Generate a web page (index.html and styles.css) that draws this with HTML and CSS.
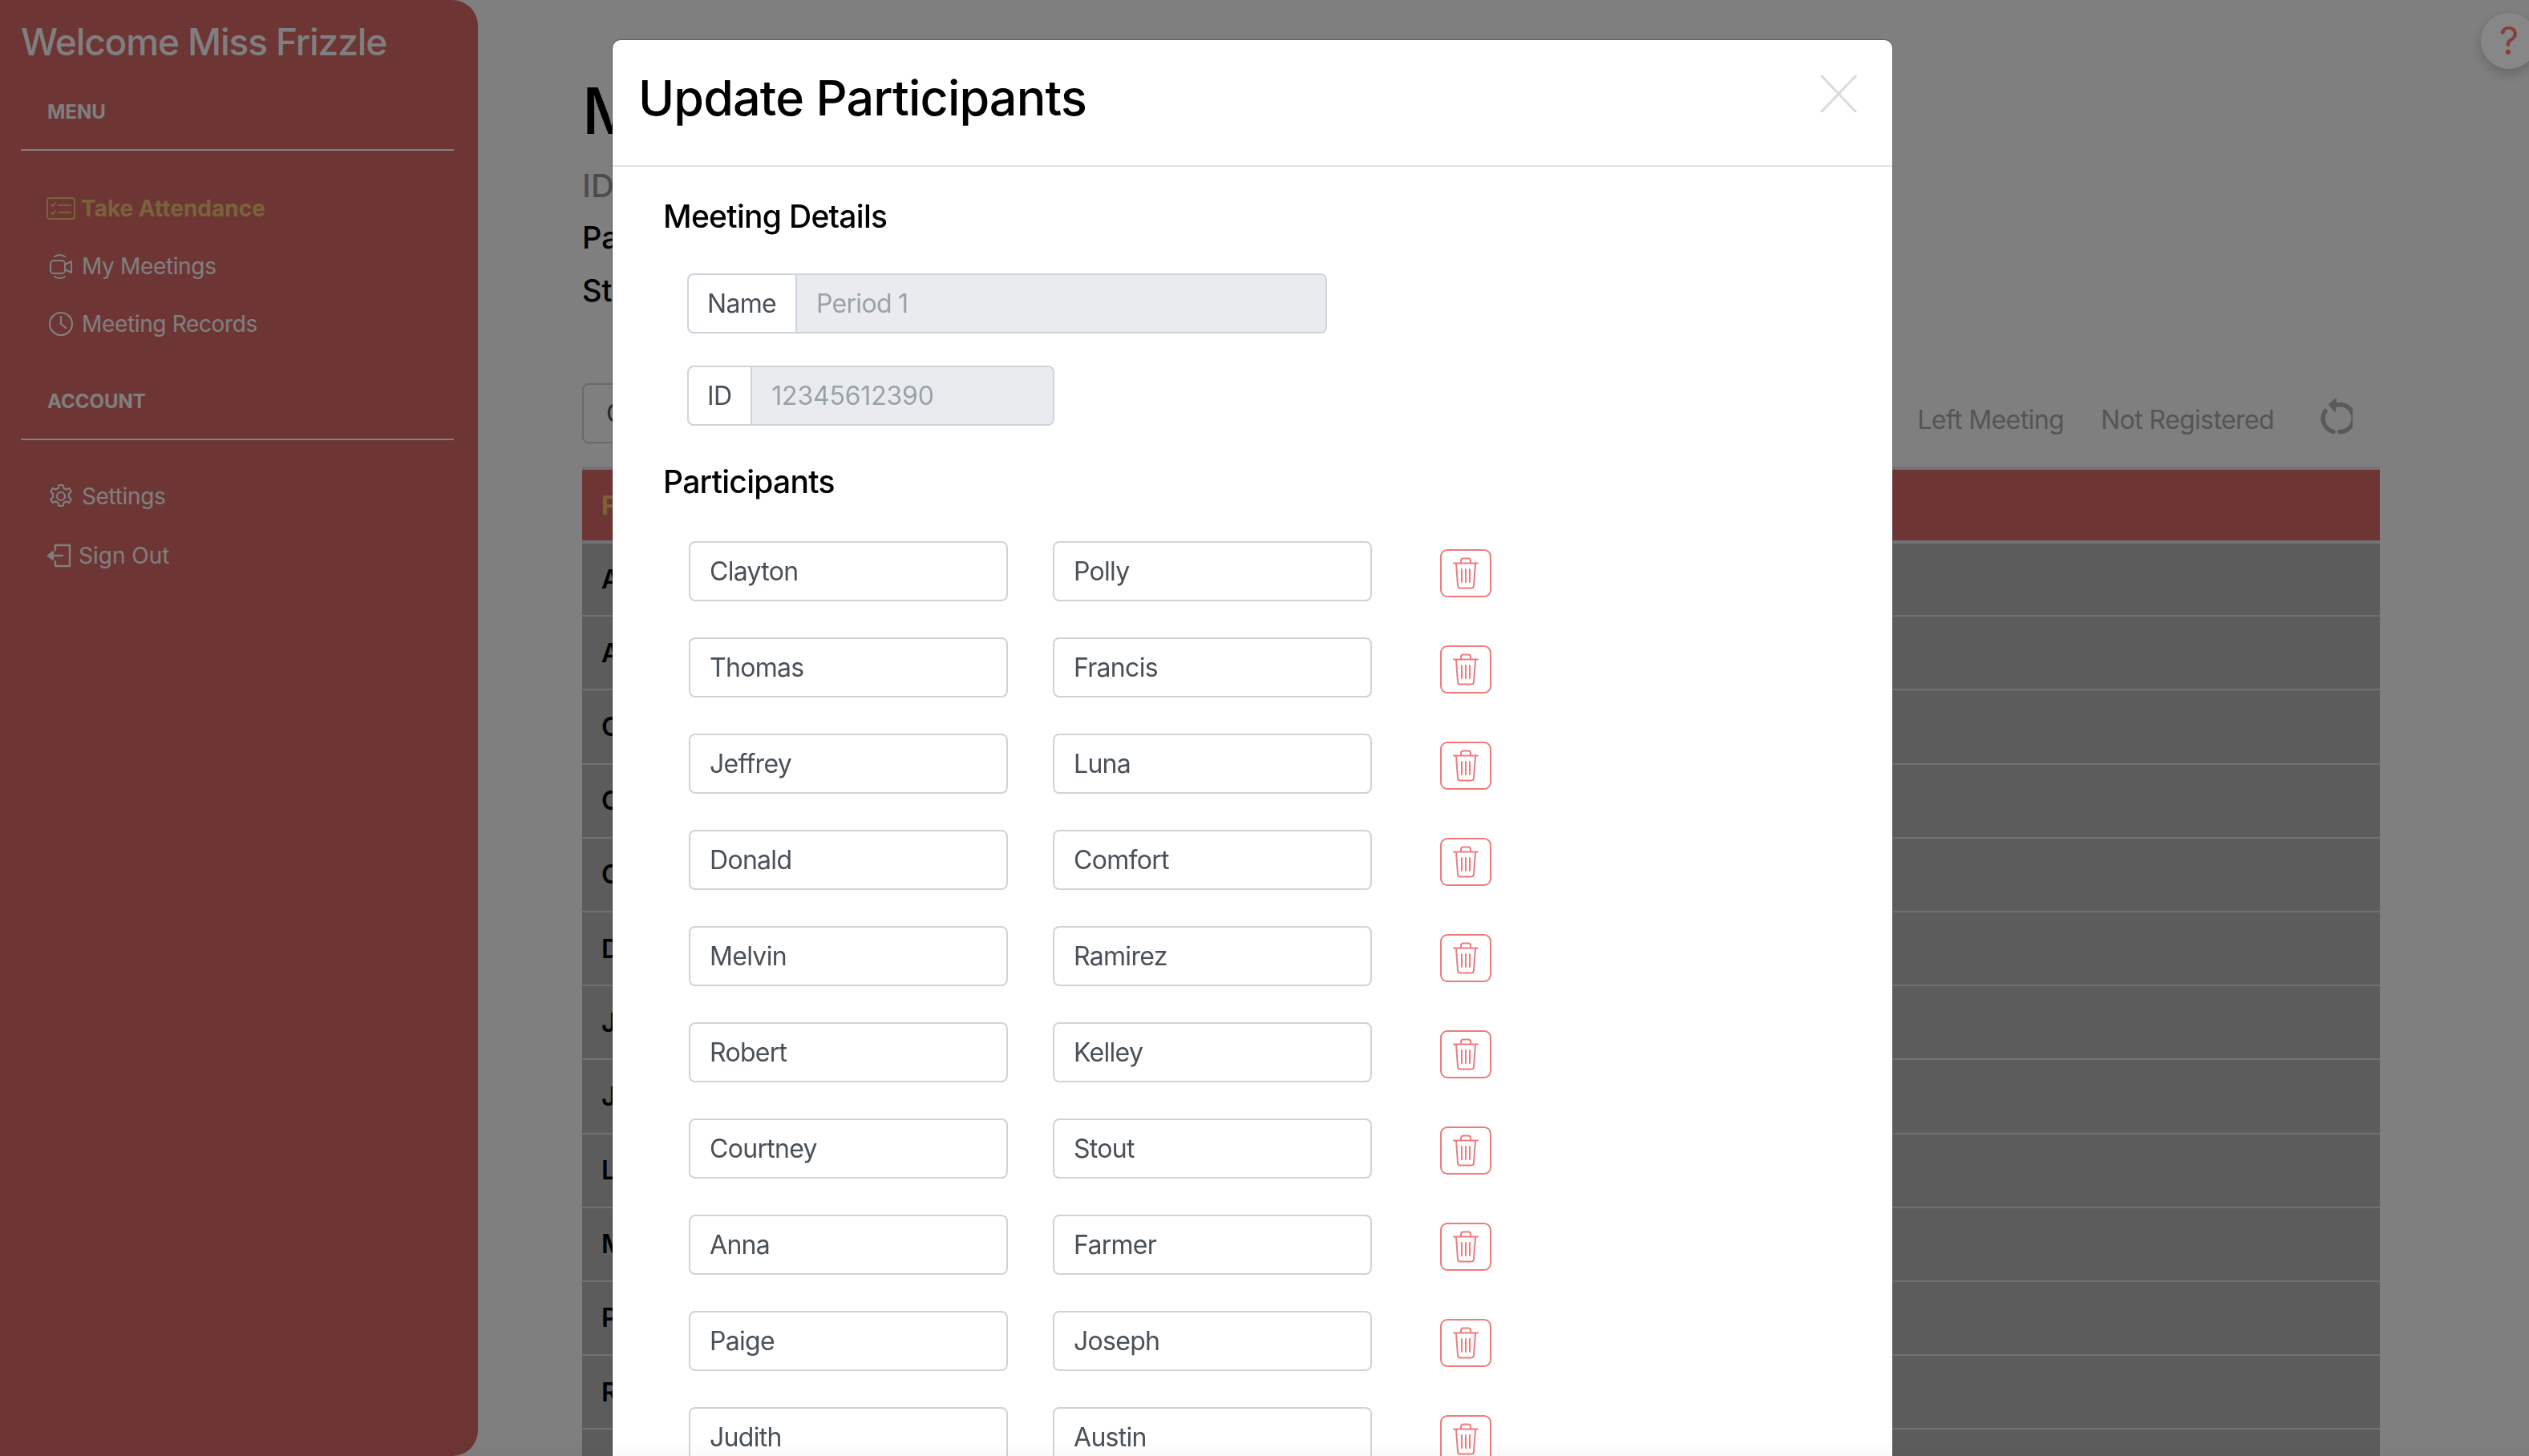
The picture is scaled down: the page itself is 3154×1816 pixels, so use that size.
FILE: index.html
```html
<!DOCTYPE html>
<html>
<head>
	<meta charset="utf-8">
	<title>Update Participants</title>
	<link rel="stylesheet" href="styles.css">
</head>
<body>

	<!-- SIDEBAR -->
	<section class="app">
		<nav class="sidebar">
			<h2 class="welcome">Welcome Miss Frizzle</h2>

			<h6 class="nav-title nav-title-menu">MENU</h6>
			<ul class="nav-list nav-list-menu">
				<li class="nav-item active">
					<svg class="nav-icon icon-wide" viewBox="0 0 36 28" fill="none" stroke="currentColor" stroke-width="2" stroke-linecap="round" stroke-linejoin="round"><rect x="1" y="1" width="34" height="26" rx="3"/><path d="M6 9l2 2 3-4M6 19l2 2 3-4M15 10h15M15 19h15"/></svg>
					Take Attendance
				</li>
				<li class="nav-item">
					<svg class="nav-icon" viewBox="0 0 32 32" fill="none" stroke="currentColor" stroke-width="2" stroke-linecap="round" stroke-linejoin="round"><rect x="3" y="9" width="18" height="16" rx="4"/><path d="M21 14l8-4v14l-8-4M8 4c4-2.500 9-2.500 13 0M8 29c4 2.500 9 2.500 13 0"/></svg>
					My Meetings
				</li>
				<li class="nav-item">
					<svg class="nav-icon" viewBox="0 0 32 32" fill="none" stroke="currentColor" stroke-width="2.200" stroke-linecap="round" stroke-linejoin="round"><circle cx="16" cy="16" r="14"/><path d="M16 7v9l6 5"/></svg>
					Meeting Records
				</li>
			</ul>

			<h6 class="nav-title">ACCOUNT</h6>
			<ul class="nav-list nav-list-account">
				<li class="nav-item">
					<svg class="nav-icon" viewBox="0 0 32 32" fill="none" stroke="currentColor" stroke-width="2.200" stroke-linecap="round" stroke-linejoin="round"><circle cx="16" cy="16" r="5"/><path d="M13.500 2h5l1 4 3 1.500 3.800-1.500 2.500 4.300-3 2.700v4l3 2.700-2.500 4.300-3.800-1.500-3 1.500-1 4h-5l-1-4-3-1.500-3.800 1.500-2.500-4.300 3-2.700v-4l-3-2.700 2.500-4.300 3.800 1.500 3-1.500z"/></svg>
					Settings
				</li>
				<li class="nav-item nav-item-out">
					<svg class="nav-icon icon-out" viewBox="0 0 32 32" fill="none" stroke="currentColor" stroke-width="2.400" stroke-linecap="round" stroke-linejoin="round"><path d="M11 9V3h18v26H11v-6M20 16H7"/><path d="M8 11.500L2 16l6 4.500z" fill="currentColor"/></svg>
					Sign Out
				</li>
			</ul>
		</nav>

		<!-- PAGE BEHIND THE MODAL -->
		<main class="content">
			<h1 class="page-title">Meeting</h1>
			<p class="page-id">ID: 12345612390</p>
			<p class="page-line">Participants: 12</p>
			<p class="page-line">Status: Active</p>

			<section class="toolbar">
				<div class="search">Copy Link</div>
				<div class="filters">
					<span>Left Meeting</span>
					<span>Not Registered</span>
					<svg class="refresh" viewBox="0 0 40 45" fill="none" stroke="currentColor" stroke-width="5.500" stroke-linecap="round"><path d="M20 8A17 17 0 1 1 24 41.500M16 41.500A17 17 0 0 1 6 15.500"/><path d="M19 1L11 7.500 18 16z" fill="currentColor" stroke-width="2" stroke-linejoin="round"/></svg>
				</div>
			</section>

			<table class="table">
				<thead><tr><th>First Name</th></tr></thead>
				<tbody>
					<tr><td>Anna</td></tr>
					<tr><td>Austin</td></tr>
					<tr><td>Clayton</td></tr>
					<tr><td>Comfort</td></tr>
					<tr><td>Courtney</td></tr>
					<tr><td>Donald</td></tr>
					<tr><td>Jeffrey</td></tr>
					<tr><td>Judith</td></tr>
					<tr><td>Luna</td></tr>
					<tr><td>Melvin</td></tr>
					<tr><td>Paige</td></tr>
					<tr><td>Robert</td></tr>
					<tr><td></td></tr>
				</tbody>
			</table>
		</main>
	</section>

	<!-- MODAL -->
	<section class="overlay">
		<article class="modal">
			<header class="modal-header">
				<h4 class="modal-title">Update Participants</h4>
				<svg class="close" viewBox="0 0 46 46" fill="none" stroke="#dadada" stroke-width="3"><path d="M1 0l44 46M45 0L1 46"/></svg>
			</header>

			<section class="modal-body">
				<h5 class="section-title">Meeting Details</h5>

				<div class="group group-name">
					<span class="group-label">Name</span>
					<span class="group-value">Period 1</span>
				</div>
				<div class="group group-id">
					<span class="group-label">ID</span>
					<span class="group-value group-number">12345612390</span>
				</div>

				<h5 class="section-title section-participants">Participants</h5>

				<div class="row">
					<div class="field">Clayton</div>
					<div class="field">Polly</div>
					<button class="trash"><svg viewBox="0 0 32 40" fill="none" stroke="currentColor" stroke-width="2" stroke-linecap="round"><path d="M1 7.500h30M10 7V4.500C10 2.500 11.500 1.500 13 1.500h6c1.500 0 3 1 3 3V7M4 8l2 27c0 2 1.500 3.500 3.500 3.500h13c2 0 3.500-1.500 3.500-3.500l2-27M11 15v16M16 15v16M21 15v16"/></svg></button>
				</div>
				<div class="row">
					<div class="field">Thomas</div>
					<div class="field">Francis</div>
					<button class="trash"><svg viewBox="0 0 32 40" fill="none" stroke="currentColor" stroke-width="2" stroke-linecap="round"><path d="M1 7.500h30M10 7V4.500C10 2.500 11.500 1.500 13 1.500h6c1.500 0 3 1 3 3V7M4 8l2 27c0 2 1.500 3.500 3.500 3.500h13c2 0 3.500-1.500 3.500-3.500l2-27M11 15v16M16 15v16M21 15v16"/></svg></button>
				</div>
				<div class="row">
					<div class="field">Jeffrey</div>
					<div class="field">Luna</div>
					<button class="trash"><svg viewBox="0 0 32 40" fill="none" stroke="currentColor" stroke-width="2" stroke-linecap="round"><path d="M1 7.500h30M10 7V4.500C10 2.500 11.500 1.500 13 1.500h6c1.500 0 3 1 3 3V7M4 8l2 27c0 2 1.500 3.500 3.500 3.500h13c2 0 3.500-1.500 3.500-3.500l2-27M11 15v16M16 15v16M21 15v16"/></svg></button>
				</div>
				<div class="row">
					<div class="field">Donald</div>
					<div class="field">Comfort</div>
					<button class="trash"><svg viewBox="0 0 32 40" fill="none" stroke="currentColor" stroke-width="2" stroke-linecap="round"><path d="M1 7.500h30M10 7V4.500C10 2.500 11.500 1.500 13 1.500h6c1.500 0 3 1 3 3V7M4 8l2 27c0 2 1.500 3.500 3.500 3.500h13c2 0 3.500-1.500 3.500-3.500l2-27M11 15v16M16 15v16M21 15v16"/></svg></button>
				</div>
				<div class="row">
					<div class="field">Melvin</div>
					<div class="field">Ramirez</div>
					<button class="trash"><svg viewBox="0 0 32 40" fill="none" stroke="currentColor" stroke-width="2" stroke-linecap="round"><path d="M1 7.500h30M10 7V4.500C10 2.500 11.500 1.500 13 1.500h6c1.500 0 3 1 3 3V7M4 8l2 27c0 2 1.500 3.500 3.500 3.500h13c2 0 3.500-1.500 3.500-3.500l2-27M11 15v16M16 15v16M21 15v16"/></svg></button>
				</div>
				<div class="row">
					<div class="field">Robert</div>
					<div class="field">Kelley</div>
					<button class="trash"><svg viewBox="0 0 32 40" fill="none" stroke="currentColor" stroke-width="2" stroke-linecap="round"><path d="M1 7.500h30M10 7V4.500C10 2.500 11.500 1.500 13 1.500h6c1.500 0 3 1 3 3V7M4 8l2 27c0 2 1.500 3.500 3.500 3.500h13c2 0 3.500-1.500 3.500-3.500l2-27M11 15v16M16 15v16M21 15v16"/></svg></button>
				</div>
				<div class="row">
					<div class="field">Courtney</div>
					<div class="field">Stout</div>
					<button class="trash"><svg viewBox="0 0 32 40" fill="none" stroke="currentColor" stroke-width="2" stroke-linecap="round"><path d="M1 7.500h30M10 7V4.500C10 2.500 11.500 1.500 13 1.500h6c1.500 0 3 1 3 3V7M4 8l2 27c0 2 1.500 3.500 3.500 3.500h13c2 0 3.500-1.500 3.500-3.500l2-27M11 15v16M16 15v16M21 15v16"/></svg></button>
				</div>
				<div class="row">
					<div class="field">Anna</div>
					<div class="field">Farmer</div>
					<button class="trash"><svg viewBox="0 0 32 40" fill="none" stroke="currentColor" stroke-width="2" stroke-linecap="round"><path d="M1 7.500h30M10 7V4.500C10 2.500 11.500 1.500 13 1.500h6c1.500 0 3 1 3 3V7M4 8l2 27c0 2 1.500 3.500 3.500 3.500h13c2 0 3.500-1.500 3.500-3.500l2-27M11 15v16M16 15v16M21 15v16"/></svg></button>
				</div>
				<div class="row">
					<div class="field">Paige</div>
					<div class="field">Joseph</div>
					<button class="trash"><svg viewBox="0 0 32 40" fill="none" stroke="currentColor" stroke-width="2" stroke-linecap="round"><path d="M1 7.500h30M10 7V4.500C10 2.500 11.500 1.500 13 1.500h6c1.500 0 3 1 3 3V7M4 8l2 27c0 2 1.500 3.500 3.500 3.500h13c2 0 3.500-1.500 3.500-3.500l2-27M11 15v16M16 15v16M21 15v16"/></svg></button>
				</div>
				<div class="row">
					<div class="field">Judith</div>
					<div class="field">Austin</div>
					<button class="trash"><svg viewBox="0 0 32 40" fill="none" stroke="currentColor" stroke-width="2" stroke-linecap="round"><path d="M1 7.500h30M10 7V4.500C10 2.500 11.500 1.500 13 1.500h6c1.500 0 3 1 3 3V7M4 8l2 27c0 2 1.500 3.500 3.500 3.500h13c2 0 3.500-1.500 3.500-3.500l2-27M11 15v16M16 15v16M21 15v16"/></svg></button>
				</div>
			</section>
		</article>
	</section>

	<!-- HELP BUTTON -->
	<figure class="help">?</figure>

</body>
</html>
```

FILE: styles.css
```css
* {
	box-sizing: border-box;
}

html, body {
	margin: 0;
	height: 100%;
	overflow: hidden;
}

body {
	background: #fff;
	color: #000;
	font-family: Inter, "Noto Sans", sans-serif;
}

h1, h2, h4, h5, h6, p, ul, figure {
	margin: 0;
	padding: 0;
}

.app {
	display: flex;
	height: 100vh;
}

/* sidebar */
.sidebar {
	flex: 0 0 596px;
	height: 100vh;
	background: #dd6a6a;
	color: #fff;
	border-radius: 0 32px 32px 0;
	padding: 24px 30px 0 26px;
}

.welcome {
	font-size: 46px;
	font-weight: 500;
	line-height: 56px;
	letter-spacing: -1.100px;
	white-space: nowrap;
}

.nav-title {
	font-size: 24px;
	font-weight: 700;
	line-height: 28px;
	padding: 0 0 32px 33px;
	border-bottom: 2px solid #fff;
}

.nav-title-menu {
	margin-top: 46px;
}

.nav-list {
	list-style: none;
	padding: 36px 0 0 32px;
}

.nav-list-menu {
	margin-bottom: 47px;
}

.nav-list-account {
	padding-top: 34px;
}

.nav-item {
	display: flex;
	align-items: center;
	gap: 10px;
	height: 72px;
	font-size: 28px;
	letter-spacing: -0.350px;
}

.nav-item.active {
	color: #f5c574;
	font-weight: 700;
	letter-spacing: 0;
	gap: 7px;
}

.nav-item-out {
	gap: 8px;
	margin-top: 2px;
	letter-spacing: 0;
}

.nav-icon {
	flex: none;
	width: 32px;
	height: 32px;
	margin-left: 2px;
}

.icon-wide {
	width: 36px;
	height: 28px;
	margin-left: 0;
}

.icon-out {
	margin-left: 0;
}

/* page behind modal */
.content {
	flex: 1;
	padding: 90px 186px 0 130px;
}

.page-title {
	font-size: 80px;
	font-weight: 500;
	line-height: 96px;
}

.page-id {
	margin-top: 22px;
	font-size: 40px;
	font-weight: 500;
	color: #999;
	line-height: 48px;
}

.page-line {
	font-size: 38px;
	font-weight: 500;
	line-height: 48px;
	margin-top: 18px;
}

.page-id + .page-line {
	margin-top: 16px;
}

.toolbar {
	display: flex;
	justify-content: space-between;
	align-items: center;
	margin-top: 92px;
	height: 75px;
}

.search {
	width: 400px;
	height: 75px;
	border: 2px solid #ced4da;
	border-radius: 8px;
	padding: 16px 28px;
	font-size: 32px;
	color: #495057;
}

.filters {
	display: flex;
	align-items: center;
	gap: 46px;
	font-size: 32px;
	letter-spacing: -0.600px;
	color: #aaa;
	padding: 16px 34px 0 0;
}

.refresh {
	width: 40px;
	height: 45px;
	color: #b4b4b4;
	margin: -8px 0 0 12px;
}

.table {
	width: 100%;
	margin-top: 29px;
	border-collapse: collapse;
}

.table th {
	height: 92px;
	padding: 0 24px;
	background: #dd6a6a;
	color: #f5c574;
	text-align: left;
	font-size: 32px;
	border-top: 4px solid #dee2e6;
	border-bottom: 4px solid #dee2e6;
}

.table td {
	height: 92.200px;
	padding: 0 24px;
	background: #b8b8b8;
	font-size: 32px;
	font-weight: 600;
	border-bottom: 2px solid #dee2e6;
}

/* modal */
.overlay {
	position: fixed;
	inset: 0;
	background: rgba(0, 0, 0, 0.5);
	padding: 50px 30px 0 0;
	overflow: hidden;
}

.overlay::after {
	content: "";
	position: absolute;
	left: 0;
	right: 0;
	bottom: 0;
	height: 20px;
	background: linear-gradient(rgba(0, 0, 0, 0), rgba(0, 0, 0, 0.02));
}

.modal {
	width: 1596px;
	margin: 0 auto;
	background: #fff;
	border-radius: 10px 10px 0 0;
	box-shadow: 0 0 0 1px rgba(0, 0, 0, 0.25);
}

.modal-header {
	display: flex;
	justify-content: space-between;
	align-items: center;
	height: 158px;
	padding: 0 44px 12px 32px;
	border-bottom: 2px solid #dee2e6;
}

.modal-title {
	font-size: 61px;
	font-weight: 500;
	letter-spacing: -0.850px;
}

.close {
	width: 46px;
	height: 46px;
	margin-top: -10px;
}

.modal-body {
	padding: 35px 0 0 63px;
}

.section-title {
	font-size: 39px;
	font-weight: 500;
	letter-spacing: -0.700px;
	line-height: 54px;
}

.section-participants {
	margin-top: 43px;
	margin-bottom: 47px;
}

.group {
	display: flex;
	height: 75px;
	margin-left: 30px;
	border: 2px solid #ced4da;
	border-radius: 8px;
	font-size: 32px;
	letter-spacing: -0.700px;
	line-height: 71px;
	overflow: hidden;
}

.group-name {
	width: 798px;
	margin-top: 44px;
}

.group-id {
	width: 458px;
	margin-top: 40px;
}

.group-label {
	padding: 0 24px 0 23px;
	color: #495057;
	border-right: 2px solid #ced4da;
}

.group-value {
	flex: 1;
	padding: 0 24px;
	background: #e9ebef;
	color: #98a2ab;
}

.group-number {
	letter-spacing: -0.200px;
}

.row {
	display: flex;
	align-items: flex-start;
	margin: 0 0 45px 32px;
}

.field {
	width: 398px;
	height: 75px;
	margin-right: 56px;
	border: 2px solid #ced4da;
	border-radius: 8px;
	padding: 0 24px;
	font-size: 32px;
	letter-spacing: -0.700px;
	line-height: 71px;
	color: #495057;
}

.trash {
	display: flex;
	justify-content: center;
	align-items: center;
	width: 64px;
	height: 60px;
	margin: 10px 0 0 29px;
	padding: 0;
	background: #fff;
	border: 2px solid #ee7c7c;
	border-radius: 9px;
	color: #ee7c7c;
}

.trash svg {
	width: 32px;
	height: 40px;
}

/* help */
.help {
	position: fixed;
	top: 16px;
	left: 3094px;
	width: 70px;
	height: 70px;
	border-radius: 50%;
	background: #878787;
	color: #8c3b3b;
	font-size: 48px;
	line-height: 70px;
	text-align: center;
	box-shadow: 0 6px 16px rgba(0, 0, 0, 0.2);
}
```
